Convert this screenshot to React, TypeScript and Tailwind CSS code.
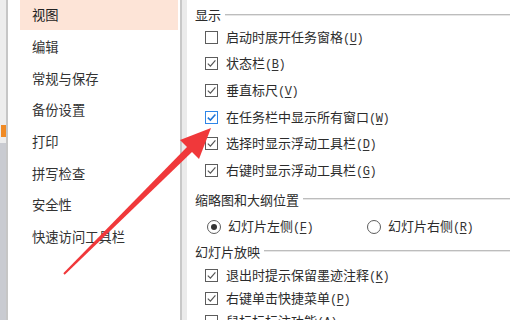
import React from "react";

const cjk = "font-['Noto_Sans_CJK_SC','Noto_Sans',sans-serif]";

function Mn({ c }: { c: string }) {
  return (
    <span className="font-['Liberation_Mono',monospace] text-[12px] text-[#333] tracking-[-0.5px]">
      (<span className="underline underline-offset-2">{c}</span>)
    </span>
  );
}

function Box({ checked = true, hover = false }: { checked?: boolean; hover?: boolean }) {
  return (
    <span
      className={
        hover
          ? "w-[13px] h-[13px] border border-[#2f86e8] bg-white flex items-center justify-center shrink-0"
          : "w-[13px] h-[13px] border border-[#5c5c5c] bg-white flex items-center justify-center shrink-0"
      }
    >
      {checked && (
        <svg width="11" height="11" viewBox="0 0 11 11">
          <path
            d="M1.8 5.6 L4.4 8.1 L9.4 2.4"
            fill="none"
            stroke={hover ? "#1f74d6" : "#555"}
            strokeWidth={hover ? 1.5 : 1.2}
          />
        </svg>
      )}
    </span>
  );
}

function Row({ label, m, checked = true, hover = false, h }: { label: string; m: string; checked?: boolean; hover?: boolean; h: string }) {
  return (
    <div className={`flex items-center pl-[18px] gap-[8px] shrink-0 ${h}`}>
      <Box checked={checked} hover={hover} />
      <span className="text-[13px] text-[#2b2b2b] whitespace-nowrap leading-none">
        {label}
        <Mn c={m} />
      </span>
    </div>
  );
}

function Header({ text, h }: { text: string; h: string }) {
  return (
    <div className={`flex items-center pl-[8px] gap-[4px] shrink-0 ${h}`}>
      <span className="text-[13px] text-[#2b2b2b] whitespace-nowrap leading-none">{text}</span>
      <div className="flex-1 h-[2px] border-t border-[#bdbdbd] border-b-[#e6e6e6] border-b" />
    </div>
  );
}

function Radio({ on }: { on: boolean }) {
  return (
    <span className="w-[14px] h-[14px] rounded-full border border-[#5c5c5c] bg-white flex items-center justify-center shrink-0">
      {on && <span className="w-[6px] h-[6px] rounded-full bg-[#333]" />}
    </span>
  );
}

export default function App() {
  const items = ["视图", "编辑", "常规与保存", "备份设置", "打印", "拼写检查", "安全性", "快速访问工具栏"];
  return (
    <div className={`relative w-[510px] h-[320px] overflow-hidden bg-white flex ${cjk}`}>
      {/* left strip */}
      <div className="w-[6px] h-full bg-[#ededed] flex flex-col shrink-0">
        <div className="h-[125px] shrink-0" />
        <div className="w-[5px] h-[12px] bg-[#f08a24] ml-[1px] shrink-0" />
        <div className="h-[6px] shrink-0" />
        <div className="flex-1 bg-[#c9cbd1]" />
      </div>
      <div className="w-[2px] h-full bg-[#c6c6c6] shrink-0" />
      {/* list */}
      <div className="w-[172px] h-full bg-white flex flex-col gap-[1.7px] pl-[12px] pr-[2px] shrink-0">
        {items.map((t, i) => (
          <div
            key={t}
            className={
              i === 0
                ? "h-[30px] shrink-0 flex items-center pl-[12px] bg-[#fde4d7] text-[13.3px] text-[#222] leading-none"
                : "h-[30px] shrink-0 flex items-center pl-[12px] text-[13.3px] text-[#333] leading-none"
            }
          >
            {t}
          </div>
        ))}
      </div>
      <div className="w-[2px] h-full bg-[#c8c8c8] shrink-0" />
      <div className="w-[5px] h-full bg-[#ebebeb] shrink-0" />
      {/* right pane */}
      <div className="flex-1 h-full flex flex-col pt-[5px] bg-white">
        <Header text="显示" h="h-[19px]" />
        <Row label="启动时展开任务窗格" m="U" checked={false} h="h-[26.6px]" />
        <Row label="状态栏" m="B" h="h-[26.6px]" />
        <Row label="垂直标尺" m="V" h="h-[26.6px]" />
        <Row label="在任务栏中显示所有窗口" m="W" hover h="h-[26.6px]" />
        <Row label="选择时显示浮动工具栏" m="D" h="h-[26.6px]" />
        <Row label="右键时显示浮动工具栏" m="G" h="h-[26.6px]" />
        <Header text="缩略图和大纲位置" h="h-[31px]" />
        <div className="h-[24px] flex items-center pl-[20px] shrink-0">
          <div className="flex items-center gap-[7px] w-[160px]">
            <Radio on />
            <span className="text-[13px] text-[#2b2b2b] whitespace-nowrap leading-none">
              幻灯片左侧<Mn c="F" />
            </span>
          </div>
          <div className="flex items-center gap-[7px]">
            <Radio on={false} />
            <span className="text-[13px] text-[#2b2b2b] whitespace-nowrap leading-none">
              幻灯片右侧<Mn c="R" />
            </span>
          </div>
        </div>
        <Header text="幻灯片放映" h="h-[25px]" />
        <Row label="退出时提示保留墨迹注释" m="K" h="h-[23px]" />
        <Row label="右键单击快捷菜单" m="P" h="h-[23px]" />
        <Row label="鼠标标标注功能" m="A" checked={false} h="h-[23px]" />
      </div>
      {/* red arrow */}
      <svg className="absolute left-0 top-0 pointer-events-none" width="510" height="320" viewBox="0 0 510 320">
        <polygon points="63.3,273.3 64.7,274.7 192.5,151.5 187.5,146.5" fill="#f0383a" />
        <polygon points="211,128 180,140 199,159" fill="#f0383a" />
      </svg>
    </div>
  );
}
